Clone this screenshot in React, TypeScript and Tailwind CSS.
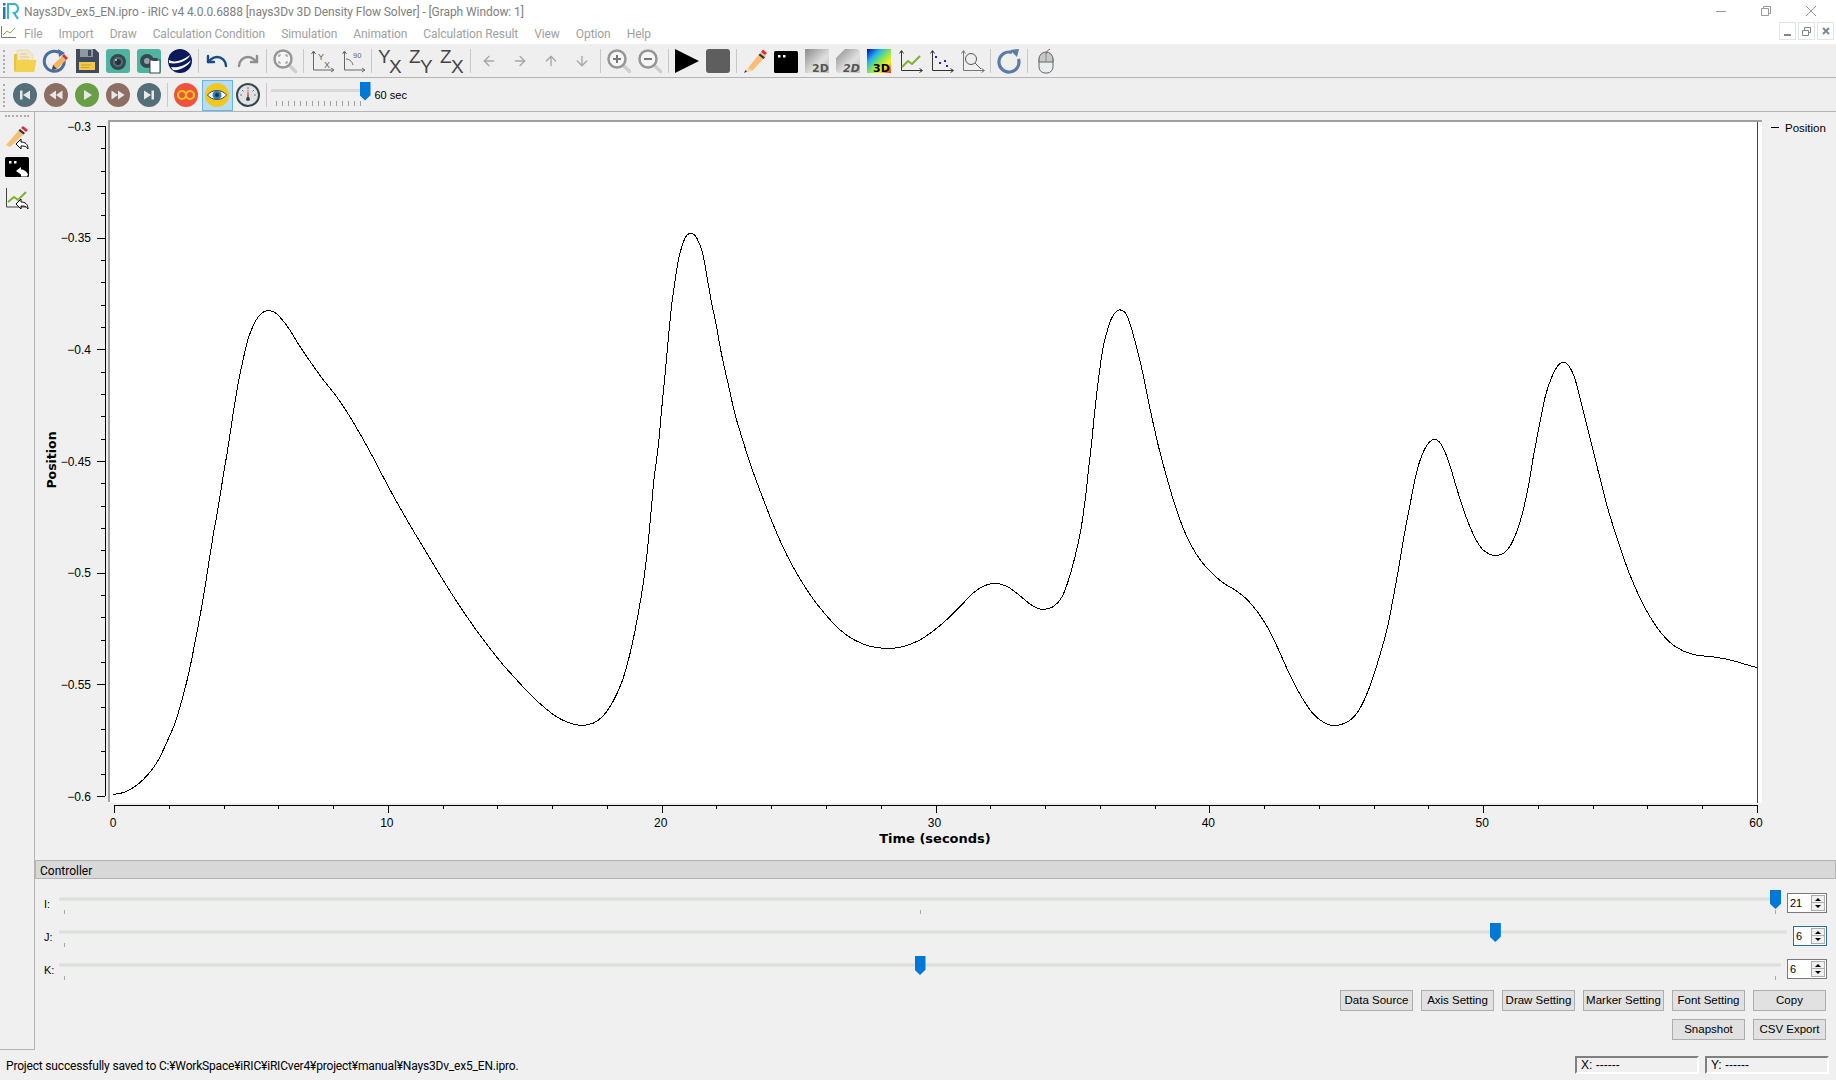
import type { ReactNode } from "react";
import { ArrowDown, ArrowLeft, ArrowRight, ArrowUp, Redo, Undo } from "lucide-react";

// curve samples read from the plot, grouped by crop: [x offset, [dx*3, dy*2.703]...]
const SEGMENTS: [number, number[][]][] = [
  [110, [[10,1553],[45,1546],[80,1528],[115,1498],[145,1460],[170,1412],[195,1360],[215,1300],[235,1230],[250,1165],[265,1095],[280,1020],[295,935],[310,850],[325,775],[340,690],[355,610],[370,520],[385,440],[400,375],[415,320],[430,285],[445,262],[460,249],[477,245],[495,250],[515,268],[540,298],[565,335],[600,382],[640,432],[680,478],[715,525],[750,578],[785,635],[820,695],[860,762],[900,825],[940,885],[980,945],[1020,1003],[1060,1058],[1100,1110],[1140,1158],[1180,1203],[1220,1243]]],
  [530, [[0,1282],[40,1315],[80,1343],[120,1360],[155,1366],[190,1360],[220,1340],[250,1300],[275,1250],[295,1190],[315,1110],[335,1010],[350,910],[362,800],[372,700],[385,610],[395,510],[405,420],[415,320],[425,230],[435,165],[445,110],[458,65],[470,42],[485,36],[500,48],[518,90],[533,165],[545,225],[560,290],[575,365],[595,445],[615,525],[640,600],[665,670],[700,755],[735,835],[770,905],[810,970],[850,1025],[890,1070],[930,1108],[975,1136],[1020,1152],[1070,1158],[1120,1153],[1170,1135],[1215,1107]]],
  [950, [[0,1072],[35,1040],[70,1008],[100,990],[135,982],[170,990],[205,1012],[240,1038],[265,1050],[285,1052],[310,1045],[335,1020],[355,975],[375,910],[392,840],[405,760],[415,680],[425,600],[435,510],[447,420],[458,350],[470,305],[485,265],[500,247],[510,243],[525,250],[540,280],[560,345],[580,420],[600,510],[625,610],[650,695],[680,785],[710,855],[740,905],[775,945],[815,978],[855,1000],[890,1025],[925,1062],[955,1105],[985,1160],[1020,1230],[1055,1290],[1090,1335],[1125,1360],[1160,1366]]],
  [1350, [[0,1352],[30,1320],[60,1260],[85,1190],[110,1110],[130,1020],[150,920],[165,840],[180,770],[195,700],[210,650],[230,610],[252,593],[272,605],[295,650],[320,725],[345,795],[370,850],[395,888],[420,904],[440,907],[465,898],[490,865],[515,800],[535,720],[550,640],[565,570],[585,480],[605,425],[625,392],[640,385],[655,392],[675,430],[695,500],[720,590],[745,680],[775,785],[805,870],[840,960],[880,1040],[920,1100],[960,1142],[1000,1165],[1040,1176],[1090,1181],[1140,1189],[1190,1202],[1222,1210]]],
];

function curvePath() {
  const pts = SEGMENTS.flatMap(([base, list]) =>
    list.map(([x, y]) => [base + x / 3, 220 + y / 2.703]),
  );
  let d = `M${pts[0][0]} ${pts[0][1]}`;
  for (let i = 0; i < pts.length - 1; i++) {
    const p0 = pts[Math.max(i - 1, 0)];
    const p1 = pts[i];
    const p2 = pts[i + 1];
    const p3 = pts[Math.min(i + 2, pts.length - 1)];
    d += ` C${(p1[0] + (p2[0] - p0[0]) / 6).toFixed(1)} ${(p1[1] + (p2[1] - p0[1]) / 6).toFixed(1)} ${(p2[0] - (p3[0] - p1[0]) / 6).toFixed(1)} ${(p2[1] - (p3[1] - p1[1]) / 6).toFixed(1)} ${p2[0].toFixed(1)} ${p2[1].toFixed(1)}`;
  }
  return d;
}

function Ico({ children, size = 24 }: { children: ReactNode; size?: number }) {
  return (
    <svg width={size} height={size} viewBox="0 0 24 24" className="block overflow-visible">
      {children}
    </svg>
  );
}

const Open = () => (
  <Ico>
    <path d="M4 1h11l5 5v8H4z" fill="#f3e8c9" stroke="#d9c998" strokeWidth=".5" />
    <path d="M7 5h7M7 8h9M7 11h9" stroke="#d8cba6" />
    <path d="M1 5h3v6h19l-2 12H3a2 2 0 0 1-2-2z" fill="#e8c53f" />
    <path d="M3 11h20.500l-2.500 12H3z" fill="#f3d250" />
  </Ico>
);
const ReloadPencil = () => (
  <Ico>
    <path d="M15 3.500A10 10 0 1 0 20 10" fill="none" stroke="#48709e" strokeWidth="3" />
    <path d="M14 0l7 4-6 4z" fill="#48709e" />
    <path d="M8 21l1-5 9-9 4 4-9 9z" fill="#f6b45e" />
    <path d="M18 7l2-2 4 4-2 2z" fill="#d8323a" />
    <path d="M8 21l1-5 4 4z" fill="#3b4a5a" />
  </Ico>
);
const Save = () => (
  <Ico>
    <path d="M1 0h19l4 4v20H1z" fill="#3f4b5b" />
    <rect x="5" y="0" width="13" height="8" fill="#8f99a3" />
    <rect x="13" y="1" width="3" height="6" fill="#3f4b5b" />
    <rect x="4" y="13" width="16" height="8" fill="#f2c94c" />
    <path d="M6 16h10M6 18.500h8" stroke="#c9a02c" />
  </Ico>
);
const Camera = () => (
  <Ico>
    <rect width="24" height="24" rx="3" fill="#4fb49f" />
    <circle cx="12" cy="13" r="8" fill="#37474f" />
    <circle cx="12" cy="13" r="5" fill="#546e7a" />
    <circle cx="12" cy="13" r="3" fill="#263238" />
    <circle cx="10" cy="11" r="1" fill="#cfd8dc" />
  </Ico>
);
const CameraCopy = () => (
  <Ico>
    <rect width="24" height="24" rx="3" fill="#4fb49f" />
    <circle cx="10" cy="12" r="7" fill="#37474f" />
    <circle cx="10" cy="12" r="3" fill="#90a4ae" />
    <rect x="13" y="11" width="10" height="13" fill="#fff" stroke="#37474f" />
    <rect x="15.500" y="9" width="5" height="3" fill="#37474f" />
  </Ico>
);
const Earth = () => (
  <Ico>
    <circle cx="12" cy="12" r="12" fill="#0c1a5c" />
    <path d="M1 11c5 3 13 1 21-5-1 5-12 10-21 8z" fill="#fff" />
    <path d="M3 18c7 1 14-1 20-7-2 6-11 11-18 10z" fill="#fff" />
  </Ico>
);
const Magnifier = ({ children }: { children?: ReactNode }) => (
  <Ico>
    <path d="M16 16l6.500 6.500" stroke="#cfcfcf" strokeWidth="3.500" strokeLinecap="round" />
    <circle cx="10" cy="10" r="8.500" fill="#f6f6f6" stroke="#969696" strokeWidth="2.500" />
    {children}
  </Ico>
);
const ZoomFit = () => (
  <Magnifier>
    <path d="M6 8V6h2M12 6h2v2M14 12v2h-2M8 14H6v-2" fill="none" stroke="#969696" strokeWidth="1.200" />
  </Magnifier>
);
const AxisXY = () => (
  <Ico>
    <path d="M3.500 3v18H23M1.500 5l2-3 2 3M21 19l3 2-3 2" fill="none" stroke="#666" />
    <text x="8" y="11" fontSize="9" fill="#666" fontFamily="Liberation Sans">Y</text>
    <text x="14" y="19" fontSize="9" fill="#666" fontFamily="Liberation Sans">X</text>
  </Ico>
);
const AxisRot = () => (
  <Ico>
    <path d="M3.500 3v18H23M1.500 5l2-3 2 3M21 19l3 2-3 2" fill="none" stroke="#666" />
    <path d="M5 10c3 0 6 2 7 6" fill="none" stroke="#666" />
    <text x="12" y="9" fontSize="7.500" fill="#666" fontFamily="Liberation Sans">90</text>
  </Ico>
);
const Letters = ({ a, b }: { a: string; b: string }) => (
  <Ico>
    <text x="0" y="14" fontSize="19" fill="#444" fontFamily="Liberation Sans">{a}</text>
    <text x="11" y="23.500" fontSize="19" fill="#444" fontFamily="Liberation Sans">{b}</text>
  </Ico>
);
const Pencil = () => (
  <Ico>
    <path d="M5 19L18 3l5 4L9 22z" fill="#f7bf6e" />
    <path d="M18 3l2-2.500 4 3.500-2 2z" fill="#db2f3a" />
    <path d="M17 4.500l5 4-1.500 1.500-5-4z" fill="#22384f" />
    <path d="M5 19l4 3-8 2z" fill="#f4d9ae" />
    <path d="M1 24l1.500-3 1.500 1.500z" fill="#22384f" />
  </Ico>
);
const Terminal = () => (
  <Ico>
    <rect x="0" y="2" width="24" height="22" rx="1.500" fill="#000" />
    <rect x="4" y="6" width="2.500" height="2.500" fill="#fff" />
    <rect x="9" y="6" width="2.500" height="2.500" fill="#fff" />
  </Ico>
);
const Gray2D = ({ id, cut }: { id: string; cut?: boolean }) => (
  <Ico>
    <defs>
      <linearGradient id={id} x1="0" y1="0" x2="1" y2="1">
        <stop offset="0" stopColor="#8a8a8a" />
        <stop offset=".6" stopColor="#e0e0e0" />
        <stop offset="1" stopColor="#bdbdbd" />
      </linearGradient>
    </defs>
    {cut ? (
      <path d="M0 9L9 0h11a4 4 0 0 1 4 4v20H4a4 4 0 0 1-4-4z" fill={`url(#${id})`} />
    ) : (
      <rect width="24" height="24" fill={`url(#${id})`} />
    )}
    <text x="7" y="23" fontSize="11" fontWeight="700" fontStyle={cut ? "italic" : "normal"} fill="#555" fontFamily="DejaVu Sans">2D</text>
  </Ico>
);
const Color3D = () => (
  <Ico>
    <defs>
      <linearGradient id="rainbow" x1="0" y1="0" x2="1" y2="1">
        <stop offset="0" stopColor="#0000c0" />
        <stop offset=".3" stopColor="#22b8e8" />
        <stop offset=".5" stopColor="#7fe060" />
        <stop offset=".75" stopColor="#f4f020" />
        <stop offset="1" stopColor="#f02020" />
      </linearGradient>
    </defs>
    <rect width="24" height="24" fill="url(#rainbow)" />
    <text x="6" y="23" fontSize="11" fontWeight="700" fill="#000" fontFamily="DejaVu Sans">3D</text>
  </Ico>
);
const AxisFrame = () => (
  <path d="M3.500 2v19.500H24M1.500 4.500l2-3 2 3M21.500 19.500l3 2-3 2" fill="none" stroke="#333" />
);
const LineChart = () => (
  <Ico>
    <AxisFrame />
    <path d="M4 18l6-6 4 3 8-8" fill="none" stroke="#7cb32e" strokeWidth="2" />
  </Ico>
);
const Scatter = () => (
  <Ico>
    <AxisFrame />
    <g fill="#2222dd">
      <rect x="6" y="7" width="2" height="2" />
      <rect x="10" y="13" width="2" height="2" />
      <rect x="15" y="11" width="2" height="2" />
      <rect x="17" y="16" width="2" height="2" />
    </g>
  </Ico>
);
const ChartZoom = () => (
  <Ico>
    <path d="M3.500 2v19.500H24M1.500 4.500l2-3 2 3M21.500 19.500l3 2-3 2" fill="none" stroke="#777" />
    <circle cx="11" cy="10" r="5.500" fill="none" stroke="#555" />
    <path d="M15 14l6 6" stroke="#555" />
  </Ico>
);
const Reload = () => (
  <Ico>
    <path d="M15 3.500A10 10 0 1 0 21.500 10" fill="none" stroke="#5a7ca8" strokeWidth="3.200" />
    <path d="M13 1l9-1-2 8z" fill="#5a7ca8" />
  </Ico>
);
const Mouse = () => (
  <Ico>
    <rect x="5" y="5" width="14" height="19" rx="6" fill="#e6eeee" stroke="#666" />
    <path d="M5 12V10a6 6 0 0 1 14 0v3H5z" fill="#c8c8c8" stroke="#666" />
    <path d="M12 5v8" stroke="#888" />
    <path d="M12 5c0-2 1-3 4-5" fill="none" stroke="#666" />
  </Ico>
);

const Round = ({ color, children }: { color: string; children: ReactNode }) => (
  <Ico>
    <circle cx="12" cy="12" r="12" fill={color} />
    <g fill="#e8e8e8">{children}</g>
  </Ico>
);
const Gauge = () => (
  <Ico>
    <circle cx="12" cy="12" r="11" fill="#dfe3e4" stroke="#37474f" strokeWidth="2" />
    <path d="M12 4v2M6 7l1.500 1.500M18 7l-1.500 1.500M4 12h2M18 12h2" stroke="#607d8b" />
    <path d="M11 15l1-11 1 11z" fill="#e0442f" />
    <circle cx="12" cy="16" r="2" fill="#37474f" />
  </Ico>
);

function Handle() {
  return <div className="w-[3px] ml-[3px] mr-[3.5px] my-[5px] h-[23px] border-l-2 border-dotted border-[#adadad]" />;
}
function Sep() {
  return <div className="w-[6px] h-[24px] flex justify-center"><div className="w-px h-full bg-[#c8c8c8]" /></div>;
}
function Btn({ children, active }: { children: ReactNode; active?: boolean }) {
  return (
    <div className={`w-[31px] h-[31px] flex items-center justify-center border ${active ? "bg-[#b9dcf5] border-[#66b5ee]" : "border-transparent"}`}>
      {children}
    </div>
  );
}
const arrow = "text-[#a6a6a6]";

function Toolbar1() {
  return (
    <div className="h-[34px] border-b border-[#b4b4b4] bg-[#efefef] flex items-center pt-[1px]">
      <Handle />
      <Btn><Open /></Btn><Btn><ReloadPencil /></Btn><Btn><Save /></Btn><Btn><Camera /></Btn><Btn><CameraCopy /></Btn><Btn><Earth /></Btn>
      <Sep />
      <Btn><Undo size={24} color="#1b4a8a" strokeWidth={2.4} /></Btn><Btn><Redo size={24} color="#8f8f8f" strokeWidth={2.4} /></Btn>
      <Sep />
      <Btn><ZoomFit /></Btn>
      <Sep />
      <Btn><AxisXY /></Btn><Btn><AxisRot /></Btn>
      <Sep />
      <Btn><Letters a="Y" b="X" /></Btn><Btn><Letters a="Z" b="Y" /></Btn><Btn><Letters a="Z" b="X" /></Btn>
      <Sep />
      <Btn><ArrowLeft size={16} className={arrow} /></Btn><Btn><ArrowRight size={16} className={arrow} /></Btn>
      <Btn><ArrowUp size={16} className={arrow} /></Btn><Btn><ArrowDown size={16} className={arrow} /></Btn>
      <Sep />
      <Btn><Magnifier><path d="M6 10h8M10 6v8" stroke="#777" strokeWidth="2" /></Magnifier></Btn>
      <Btn><Magnifier><path d="M6 10h8" stroke="#777" strokeWidth="2" /></Magnifier></Btn>
      <Sep />
      <Btn><Ico><path d="M0 0l24 12L0 24z" fill="#000" /></Ico></Btn>
      <Btn><Ico><rect width="24" height="24" rx="3" fill="#5e5e5e" /></Ico></Btn>
      <Sep />
      <Btn><Pencil /></Btn><Btn><Terminal /></Btn><Btn><Gray2D id="g2a" /></Btn><Btn><Gray2D id="g2b" cut /></Btn><Btn><Color3D /></Btn>
      <Btn><LineChart /></Btn><Btn><Scatter /></Btn><Btn><ChartZoom /></Btn>
      <Sep />
      <Btn><Reload /></Btn>
      <Sep />
      <Btn><Mouse /></Btn>
    </div>
  );
}

function Toolbar2() {
  return (
    <div className="h-[34px] border-b border-[#b4b4b4] bg-[#efefef] flex items-center pt-[1px]">
      <Handle />
      <Btn><Round color="#546e7a"><rect x="7" y="7.500" width="2.500" height="9" /><path d="M17 7.500v9l-7-4.500z" /></Round></Btn>
      <Btn><Round color="#8d6e63"><path d="M12 7.500v9L5.500 12zM18.500 7.500v9L12 12z" /></Round></Btn>
      <Btn><Round color="#689f45"><path d="M9 7l8 5-8 5z" /></Round></Btn>
      <Btn><Round color="#8d6e63"><path d="M5.500 7.500v9L12 12zM12 7.500v9l6.500-4.500z" /></Round></Btn>
      <Btn><Round color="#546e7a"><rect x="14.500" y="7.500" width="2.500" height="9" /><path d="M7 7.500v9l7-4.500z" /></Round></Btn>
      <Sep />
      <Btn>
        <Round color="#ee5340">
          <circle cx="8" cy="12" r="4" fill="none" stroke="#f5c518" strokeWidth="2.200" />
          <circle cx="16" cy="12" r="4" fill="none" stroke="#f5c518" strokeWidth="2.200" />
        </Round>
      </Btn>
      <Btn active>
        <Ico>
          <circle cx="12" cy="12" r="12" fill="#f1c81f" />
          <path d="M2.500 12C7 6 17 6 21.500 12 17 18 7 18 2.500 12z" fill="#fff" stroke="#37474f" />
          <circle cx="12" cy="12" r="4.500" fill="#2f80b9" />
          <circle cx="12" cy="12" r="2" fill="#22303a" />
        </Ico>
      </Btn>
      <Btn><Gauge /></Btn>
      <Sep />
      <div className="relative w-[100px] h-[33px] ml-[1px]">
        <div className="absolute left-0 top-[10px] w-[93px] h-[3px] bg-[#dcdfdc] border-y border-[#d4d6d4]" />
        <div className="absolute left-[89px] top-[3px] w-[11px] h-[19px] bg-[#0078d7] [clip-path:polygon(0_0,100%_0,100%_72%,50%_100%,0_72%)]" />
        <div className="absolute left-[5px] top-[22px] w-[90px] h-[5px] bg-[repeating-linear-gradient(90deg,#a0a0a0_0,#a0a0a0_1px,transparent_1px,transparent_6px)]" />
      </div>
      <span className="ml-[4px] text-[11px] text-black">60 sec</span>
    </div>
  );
}

function Dock() {
  const Back = () => (
    <path d="M11 18l5-5v3c4 0 7 2 7 7-2-3-4-3-7-3v3z" fill="#fff" stroke="#000" strokeWidth="1" />
  );
  return (
    <div className="w-[35px] shrink-0 border-r border-b border-[#b4b4b4] flex flex-col items-center">
      <div className="mt-[3px] w-[24px] h-[2px] border-t-2 border-dotted border-[#adadad]" />
      <div className="mt-[9px] flex flex-col gap-[6px]">
        <Ico><path d="M1 19L15 3l5 4L5 21z" fill="#f7bf6e" /><path d="M16 2l2-2 5 4-2 2z" fill="#db2f3a" /><path d="M15 3l5 4-1.500 1.500-5-4z" fill="#22384f" /><Back /></Ico>
        <Ico><rect x="0" y="1" width="24" height="20" rx="1.500" fill="#000" /><rect x="4" y="5" width="2.500" height="2.500" fill="#fff" /><rect x="9" y="5" width="2.500" height="2.500" fill="#fff" /><path d="M11 15l5-4v2.500c3 0 6 2 7 5l-1 2H16v-2z" fill="#fff" /></Ico>
        <Ico><path d="M1.500 2v19H22" fill="none" stroke="#444" /><path d="M3 16l6-5 4 3 8-8" fill="none" stroke="#7cb32e" strokeWidth="2" /><Back /></Ico>
      </div>
    </div>
  );
}

const Y_LABELS = ["−0.3", "−0.35", "−0.4", "−0.45", "−0.5", "−0.55", "−0.6"];

function Chart() {
  const yStep = 670 / 30;
  const xStep = (1757.5 - 114.5) / 30;
  const label = "'Liberation Sans', sans-serif";
  return (
    <svg width="1801" height="748" viewBox="35 112 1801 748" className="block shrink-0">
      <rect x="108" y="120" width="1654" height="683" fill="#fff" />
      <path d="M108 121h1654M109 120v682" stroke="#a0a0a0" strokeWidth="2" fill="none" />
      <path d="M1757.500 122v681" stroke="#e00000" />
      <path d={curvePath()} fill="none" stroke="#000" strokeWidth="1" shapeRendering="crispEdges" />
      <path d="M105.500 126v670" stroke="#000" />
      {Array.from({ length: 31 }, (_, i) => {
        const y = Math.round(126 + i * yStep) + 0.5;
        return <path key={i} d={`M${i % 5 === 0 ? 97 : 101} ${y}H105`} stroke="#000" />;
      })}
      {Y_LABELS.map((t, i) => (
        <text key={t} x="91" y={130.5 + i * yStep * 5} textAnchor="end" fontSize="12" fill="#000" fontFamily={label}>{t}</text>
      ))}
      <path d="M114 805.500H1758" stroke="#000" />
      {Array.from({ length: 31 }, (_, i) => {
        const x = Math.round(114 + i * xStep) + 0.5;
        return <path key={i} d={`M${x} 806v${i % 5 === 0 ? 7 : 3}`} stroke="#000" />;
      })}
      {[0, 10, 20, 30, 40, 50, 60].map((t, i) => (
        <text key={t} x={113 + i * xStep * 5} y="827" textAnchor="middle" fontSize="12" fill="#000" fontFamily={label}>{t}</text>
      ))}
      <text x="935" y="843" textAnchor="middle" fontSize="13" fontWeight="700" fill="#000" fontFamily="'DejaVu Sans', sans-serif">Time (seconds)</text>
      <text transform="translate(56 460) rotate(-90)" textAnchor="middle" fontSize="12.500" fontWeight="700" fill="#000" fontFamily="'DejaVu Sans', sans-serif">Position</text>
      <path d="M1771 127.500h8" stroke="#000" />
      <text x="1785" y="132" fontSize="11.500" fill="#000" fontFamily={label}>Position</text>
    </svg>
  );
}

function Spin({ value, wide, focused }: { value: number; wide?: boolean; focused?: boolean }) {
  return (
    <div className={`h-[20px] shrink-0 bg-white border flex items-center justify-between pl-[2px] pr-px ${wide ? "w-[40px]" : "w-[34px]"} ${focused ? "border-[#2f6aa8]" : "border-[#7a7a7a]"}`}>
      <span className="text-[11px] leading-none text-black">{value}</span>
      <div className="w-[14px] h-[16px] flex flex-col border border-[#adadad] bg-[#f0f0f0]">
        <div className="h-1/2 border-b border-[#adadad] flex items-center justify-center">
          <div className="w-0 h-0 border-x-[3px] border-x-transparent border-b-[3px] border-b-black" />
        </div>
        <div className="h-1/2 flex items-center justify-center">
          <div className="w-0 h-0 border-x-[3px] border-x-transparent border-t-[3px] border-t-black" />
        </div>
      </div>
    </div>
  );
}

function SliderRow({ name, pos, ticks, value, wide, focused }: { name: string; pos: number; ticks: number[]; value: number; wide?: boolean; focused?: boolean }) {
  return (
    <div className="h-[33px] flex pl-[9px] pr-[9px]">
      <div className="w-[15px] text-[11px] pt-[15px] leading-[14px] text-black">{name}</div>
      <div className="relative flex-1">
        <div className="absolute inset-x-0 top-[15px] h-[4px] bg-[#dde0dd] border border-[#e4e6e4]" />
        {ticks.map((t) => (
          <div key={t} className="absolute top-[28px] w-px h-[4px] bg-[#a8a8a0]" style={{ left: `calc(5px + (100% - 11px) * ${t})` }} />
        ))}
        <div
          className="absolute top-[8px] w-[11px] h-[19px] bg-[#0078d7] [clip-path:polygon(0_0,100%_0,100%_72%,50%_100%,0_72%)]"
          style={{ left: `calc((100% - 11px) * ${pos})` }}
        />
      </div>
      <div className="ml-[6px] mt-[11px]"><Spin value={value} wide={wide} focused={focused} /></div>
    </div>
  );
}

function PushButton({ children, wide }: { children: string; wide?: boolean }) {
  return (
    <div className={`h-[21px] pt-[1px] bg-[#e1e1e1] border border-[#adadad] flex items-center justify-center text-[11.5px] text-black ${wide ? "w-[81px]" : "w-[73px]"}`}>
      {children}
    </div>
  );
}

function CoordBox({ children }: { children: string }) {
  return (
    <div className="w-[124px] h-[18px] pl-[4px] flex items-center text-[12px] text-black border-2 border-t-[#808080] border-l-[#808080] border-r-white border-b-white">
      {children}
    </div>
  );
}

export default function App() {
  const seg = "font-['Roboto']";
  return (
    <div className="w-[1836px] h-[1080px] overflow-hidden bg-[#f0f0f0] flex flex-col font-['Liberation_Sans']">
      {/* Title */}
      <div className="h-[22px] bg-white flex items-center relative shrink-0">
        <svg width="18" height="18" viewBox="0 0 18 18" className="ml-[2px]">
          <rect x="1" y="1" width="2.500" height="2.500" fill="#2b6fb5" />
          <rect x="1" y="5" width="2.500" height="12" fill="#2b6fb5" />
          <path d="M6 17V2h5a4.500 4.500 0 0 1 1 9l4 6" fill="none" stroke="#39b4c6" strokeWidth="2.200" />
        </svg>
        <span className={`ml-[4px] mt-[2px] text-[12px] tracking-[-0.08px] text-[#808080] ${seg}`}>
          Nays3Dv_ex5_EN.ipro - iRIC v4 4.0.0.6888 [nays3Dv 3D Density Flow Solver] - [Graph Window: 1]
        </span>
        <div className="ml-auto flex items-center gap-[35px] pr-[20px]">
          <div className="w-[10px] h-px bg-[#999]" />
          <svg width="10" height="10" viewBox="0 0 10 10"><path d="M.5 2.500h7v7h-7zM2.500 2.500v-2h7v7h-2" fill="none" stroke="#999" /></svg>
          <svg width="10" height="10" viewBox="0 0 10 10"><path d="M0 0l10 10M10 0L0 10" stroke="#999" /></svg>
        </div>
      </div>
      {/* Menu */}
      <div className={`h-[21px] bg-white flex items-center shrink-0 text-[12px] tracking-[-0.08px] text-[#a0a0a0] ${seg}`}>
        <svg width="16" height="12" viewBox="0 0 16 12" className="ml-[1px] mb-[2px]">
          <path d="M.5 0v11.500H15" fill="none" stroke="#777" />
          <path d="M2 9l4-4 3 2 5-5" fill="none" stroke="#7cb32e" />
        </svg>
        <div className="ml-[7px] flex gap-[16px] mt-[2px]">
          {["File", "Import", "Draw", "Calculation Condition", "Simulation", "Animation", "Calculation Result", "View", "Option", "Help"].map((m) => (
            <span key={m}>{m}</span>
          ))}
        </div>
        <div className="ml-auto flex gap-[2px] pr-[2px] mb-[3px]">
          <div className="w-[17px] h-[18px] border border-[#e4e4e4] flex items-end justify-center pb-[3px]"><div className="w-[7px] h-[2px] bg-[#7b8794]" /></div>
          <div className="w-[17px] h-[18px] border border-[#e4e4e4] flex items-center justify-center">
            <svg width="9" height="9" viewBox="0 0 9 9"><path d="M.5 3.500h6v5h-6zM2.500 3V.5h6v5H7" fill="none" stroke="#7b8794" /></svg>
          </div>
          <div className="w-[17px] h-[18px] border border-[#e4e4e4] flex items-center justify-center">
            <svg width="8" height="8" viewBox="0 0 8 8"><path d="M1 1l6 6M7 1L1 7" stroke="#7b8794" strokeWidth="2" /></svg>
          </div>
        </div>
      </div>
      <div className="h-px bg-white shrink-0" />
      <Toolbar1 />
      <Toolbar2 />
      <div className="flex h-[938px] shrink-0">
        <Dock />
        <div className="flex-1 flex flex-col min-w-0">
          <Chart />
          <div className={`h-[19px] shrink-0 bg-[#d8d8d8] border border-[#b4b4b4] pl-[4px] pt-[2px] flex items-center text-[12px] text-black ${seg}`}>
            Controller
          </div>
          <div className="pt-[3px]">
            <SliderRow name="I:" pos={1} ticks={[0, 0.5, 1]} value={21} wide />
            <SliderRow name="J:" pos={5 / 6} ticks={[0]} value={6} focused />
            <SliderRow name="K:" pos={0.5} ticks={[0, 1]} value={6} wide />
          </div>
          <div className="mt-[9px] flex flex-col items-end gap-[8px] pr-[10px]">
            <div className="flex gap-[8px]">
              <PushButton>Data Source</PushButton>
              <PushButton>Axis Setting</PushButton>
              <PushButton>Draw Setting</PushButton>
              <PushButton wide>Marker Setting</PushButton>
              <PushButton>Font Setting</PushButton>
              <PushButton>Copy</PushButton>
            </div>
            <div className="flex gap-[8px]">
              <PushButton>Snapshot</PushButton>
              <PushButton>CSV Export</PushButton>
            </div>
          </div>
        </div>
      </div>
      {/* Status */}
      <div className="h-[30px] shrink-0 flex items-center pl-[6px] pr-[7px]">
        <span className={`mt-[2px] text-[12px] tracking-[-0.18px] text-black ${seg}`}>
          Project successfully saved to C:¥WorkSpace¥iRIC¥iRICver4¥project¥manual¥Nays3Dv_ex5_EN.ipro.
        </span>
        <div className="ml-auto flex gap-[6px]">
          <CoordBox>X: ------</CoordBox>
          <CoordBox>Y: ------</CoordBox>
        </div>
      </div>
    </div>
  );
}
